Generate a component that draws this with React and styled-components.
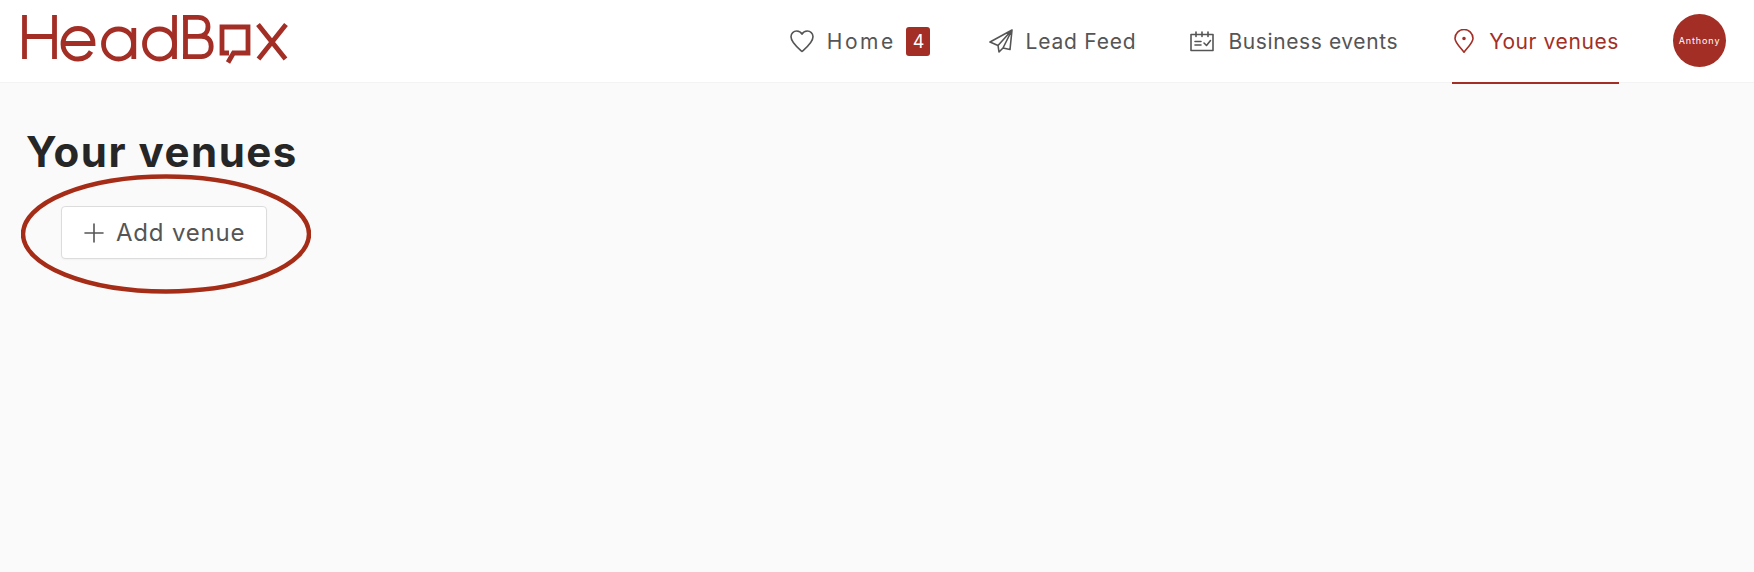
import React from "react";
import styled, { createGlobalStyle } from "styled-components";

const brand = "#a32e25";
const ink = "#555";

const GlobalStyle = createGlobalStyle`
  html, body {
    margin: 0;
    padding: 0;
    height: 100%;
    background: #fafafa;
    font-family: Inter, "Open Sans", "Liberation Sans", sans-serif;
  }
`;

const Header = styled.header`
  height: 82px;
  background: #fff;
  border-bottom: 1px solid #f3f3f3;
  display: flex;
  align-items: stretch;
  justify-content: space-between;
  padding: 0 28px 0 15px;
`;

const Logo = styled.svg`
  width: 280px;
  height: 82px;
  flex: none;
`;

const Nav = styled.nav`
  display: flex;
  align-items: stretch;
`;

const NavItem = styled.a`
  display: flex;
  align-items: center;
  gap: ${(p) => p.$iconGap ?? 15}px;
  height: 84px;
  box-sizing: border-box;
  margin-left: ${(p) => p.$gap}px;
  padding-left: 2px;
  font-size: 21px;
  letter-spacing: ${(p) => p.$spacing ?? 0.6}px;
  white-space: nowrap;
  color: ${(p) => (p.$active ? brand : ink)};
  border-bottom: 2px solid ${(p) => (p.$active ? brand : "transparent")};
`;

const Badge = styled.span`
  width: 24px;
  height: 29px;
  margin-left: -1.7px;
  border-radius: 3px;
  background: ${brand};
  color: #fff;
  font-size: 18px;
  letter-spacing: 0;
  display: flex;
  align-items: center;
  justify-content: center;
`;

const Avatar = styled.div`
  width: 53px;
  height: 53px;
  margin: 14px 0 0 54px;
  border-radius: 50%;
  background: ${brand};
  color: #fff;
  font-size: 9px;
  letter-spacing: 0.9px;
  display: flex;
  align-items: center;
  justify-content: center;
`;

const Main = styled.main`
  padding: 39px 26px 0;
`;

const Title = styled.h1`
  margin: 0;
  font-size: 42px;
  line-height: 60px;
  font-weight: 700;
  letter-spacing: 1.5px;
  color: #262626;
`;

const ButtonArea = styled.div`
  position: relative;
  margin: 24px 0 0 35px;
  width: 206px;
`;

const AddButton = styled.button`
  width: 206px;
  height: 53px;
  display: flex;
  align-items: center;
  gap: 12px;
  padding: 0 0 0 22px;
  box-sizing: border-box;
  background: #fff;
  border: 1px solid #dcdcdc;
  border-radius: 4px;
  box-shadow: 0 1px 2px rgba(0, 0, 0, 0.04);
  font: inherit;
  font-size: 24px;
  letter-spacing: 0.8px;
  color: ${ink};
`;

const Circled = styled.svg`
  position: absolute;
  left: -40px;
  top: -32px;
  width: 290px;
  height: 120px;
  pointer-events: none;
`;

const Icon = styled.svg`
  flex: none;
  fill: none;
  stroke: currentColor;
  stroke-width: 1.6;
  stroke-linejoin: round;
  stroke-linecap: round;
`;

function HeadBoxLogo() {
  return (
    <Logo viewBox="15 0 280 82" fill="none" stroke={brand} strokeWidth="4.8">
      <path d="M24.500 15v44M54.500 15v44M24.500 36.500h30" />
      <path d="M63 43.500h30c0-8.500-6.500-15-15-15s-15 7-15 15.500 7 15 15 15c5.500 0 10.500-3 13-7.500" />
      <circle cx="118.500" cy="44" r="15" />
      <path d="M133.800 28v31" />
      <circle cx="159.500" cy="44" r="15" />
      <path d="M174.500 15v44" />
      <path d="M185.500 15v44M183 17.400h15c6.500 0 10 4 10 9.300s-3.500 9.600-10 9.600h-12.500M186 36.300h15.500c6.500 0 9.700 4.500 9.700 10.200s-3.500 10.100-10 10.100H183" />
      <path d="M229 53h-7V27h26v26h-14.500l-5.500 9.500" />
      <path d="M258 24.500l27.500 34.500M286 24.500L258.500 59" />
    </Logo>
  );
}

function Heart() {
  return (
    <Icon width="24" height="24" viewBox="0 0 24 24">
      <path d="M12 22.500C8 19 1 13.500 1 7.800 1 4.300 3.700 2 6.700 2 9 2 11 3.200 12 5.200 13 3.200 15 2 17.300 2c3 0 5.700 2.300 5.700 5.800 0 5.700-7 11.200-11 14.700z" />
    </Icon>
  );
}

function Plane() {
  return (
    <Icon width="24" height="24" viewBox="0 0 24 24">
      <path d="M23 1L1 13l8 3.500 1 6.500 4-4 7 1.500zM23 1L9 16.500M23 1L14 19" />
    </Icon>
  );
}

function Calendar() {
  return (
    <Icon width="24" height="24" viewBox="0 0 24 24">
      <path d="M1 5.500h22v16H1zM6 3v4.500M12 3v4.500M18 3v4.500M5 12.500h6M5 16h6M14 14l2.500 2.500L20.500 11.500" />
    </Icon>
  );
}

function Pin() {
  return (
    <Icon width="20" height="24" viewBox="0 0 20 24">
      <path d="M10 23.200C6 18 1 13.500 1 9.500a9 9 0 0 1 18 0C19 13.500 14 18 10 23.200z" />
      <circle cx="10" cy="9.500" r="1" fill="currentColor" />
    </Icon>
  );
}

export default function App() {
  return (
    <>
      <GlobalStyle />
      <Header>
        <HeadBoxLogo />
        <Nav>
          <NavItem $iconGap={12.5} $spacing={2.5}>
            <Heart />
            Home
            <Badge>4</Badge>
          </NavItem>
          <NavItem $gap={57} $iconGap={12} $spacing={0.8}>
            <Plane />
            Lead Feed
          </NavItem>
          <NavItem $gap={52} $iconGap={14}>
            <Calendar />
            Business events
          </NavItem>
          <NavItem $gap={54} $active>
            <Pin />
            Your venues
          </NavItem>
          <Avatar>Anthony</Avatar>
        </Nav>
      </Header>
      <Main>
        <Title>Your venues</Title>
        <ButtonArea>
          <AddButton>
            <Icon width="20" height="20" viewBox="0 0 20 20">
              <path d="M10 1v18M1 10h18" />
            </Icon>
            Add venue
          </AddButton>
          <Circled viewBox="0 0 290 120" fill="none">
            <ellipse cx="145" cy="60" rx="143" ry="57.500" stroke="#a52c17" strokeWidth="4.500" />
          </Circled>
        </ButtonArea>
      </Main>
    </>
  );
}
